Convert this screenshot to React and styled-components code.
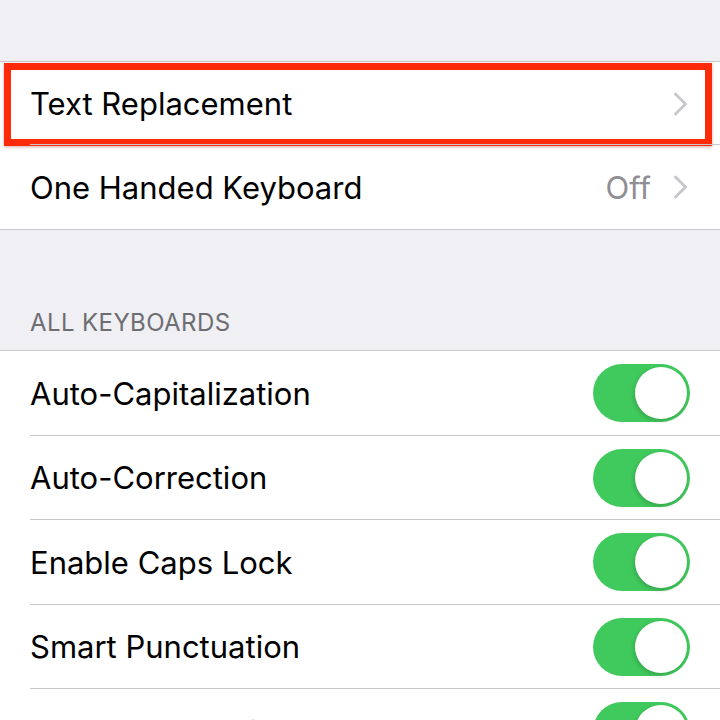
import React from 'react';
import styled, { createGlobalStyle } from 'styled-components';

const GlobalStyle = createGlobalStyle`
  html, body {
    margin: 0;
    padding: 0;
    background: #efeff4;
  }
  body {
    font-family: Inter, "Liberation Sans", Arial, sans-serif;
    -webkit-font-smoothing: antialiased;
  }
`

const Page = styled.div`
  width: 720px;
  height: 720px;
  overflow: hidden;
  background: #efeff4;
`

const Spacer = styled.div`
  height: ${({ h }) => h}px;
`

const SectionHeader = styled.div`
  height: 120px;
  display: flex;
  align-items: flex-end;
  padding: 0 30px 13px;
  box-sizing: border-box;
  font-size: 24px;
  letter-spacing: 0.4px;
  color: #6d6d72;
  text-transform: uppercase;
`

const Group = styled.div`
  background: #fff;
  border-top: 1px solid #c8c7cc;
  border-bottom: 1px solid #c8c7cc;
`

const Row = styled.div`
  position: relative;
  height: ${({ h }) => h || 84}px;
  display: flex;
  align-items: center;
  padding: 0 30px;
  box-sizing: border-box;
  &:not(:last-child)::after {
    content: '';
    position: absolute;
    left: 30px;
    right: 0;
    bottom: 0;
    height: 1px;
    background: #c8c7cc;
  }
`

const Label = styled.div`
  flex: 1;
  font-size: 31px;
  color: #000;
`

const Detail = styled.div`
  font-size: 31px;
  color: #8e8e93;
  margin-right: 22px;
`

const Chevron = () => (
  <svg width="15" height="24" viewBox="0 0 15 24" style={{ marginRight: 2 }}>
    <path d="M2.5 2 L12.5 12 L2.5 22" fill="none" stroke="#c7c7cc" strokeWidth="3" strokeLinecap="round" strokeLinejoin="round" />
  </svg>
)

const Highlight = styled.div`
  position: absolute;
  left: 4px;
  right: 8px;
  top: 1px;
  bottom: -1px;
  border: 7px solid #ff2a0a;
  box-shadow: 0 1px 3px rgba(120, 20, 0, 0.35);
  pointer-events: none;
`

const Track = styled.div`
  width: 97px;
  height: 58px;
  border-radius: 29px;
  background: #40c95c;
  position: relative;
  flex-shrink: 0;
`

const Knob = styled.div`
  position: absolute;
  right: 3px;
  top: 3px;
  width: 52px;
  height: 52px;
  border-radius: 50%;
  background: #fff;
  box-shadow: -1px 2px 4px rgba(0, 0, 0, 0.18);
`

const Toggle = () => (
  <Track>
    <Knob />
  </Track>
)

const toggles = [
  'Auto-Capitalization',
  'Auto-Correction',
  'Enable Caps Lock',
  'Smart Punctuation',
  'Character Preview',
]

export default function App() {
  return (
    <Page>
      <GlobalStyle />
      <Spacer h={61} />
      <Group>
        <Row h={83}>
          <Label>Text Replacement</Label>
          <Chevron />
          <Highlight />
        </Row>
        <Row h={84}>
          <Label>One Handed Keyboard</Label>
          <Detail>Off</Detail>
          <Chevron />
        </Row>
      </Group>
      <SectionHeader>All Keyboards</SectionHeader>
      <Group>
        {toggles.map((t) => (
          <Row key={t} h={84.5}>
            <Label>{t}</Label>
            <Toggle />
          </Row>
        ))}
      </Group>
    </Page>
  )
}
